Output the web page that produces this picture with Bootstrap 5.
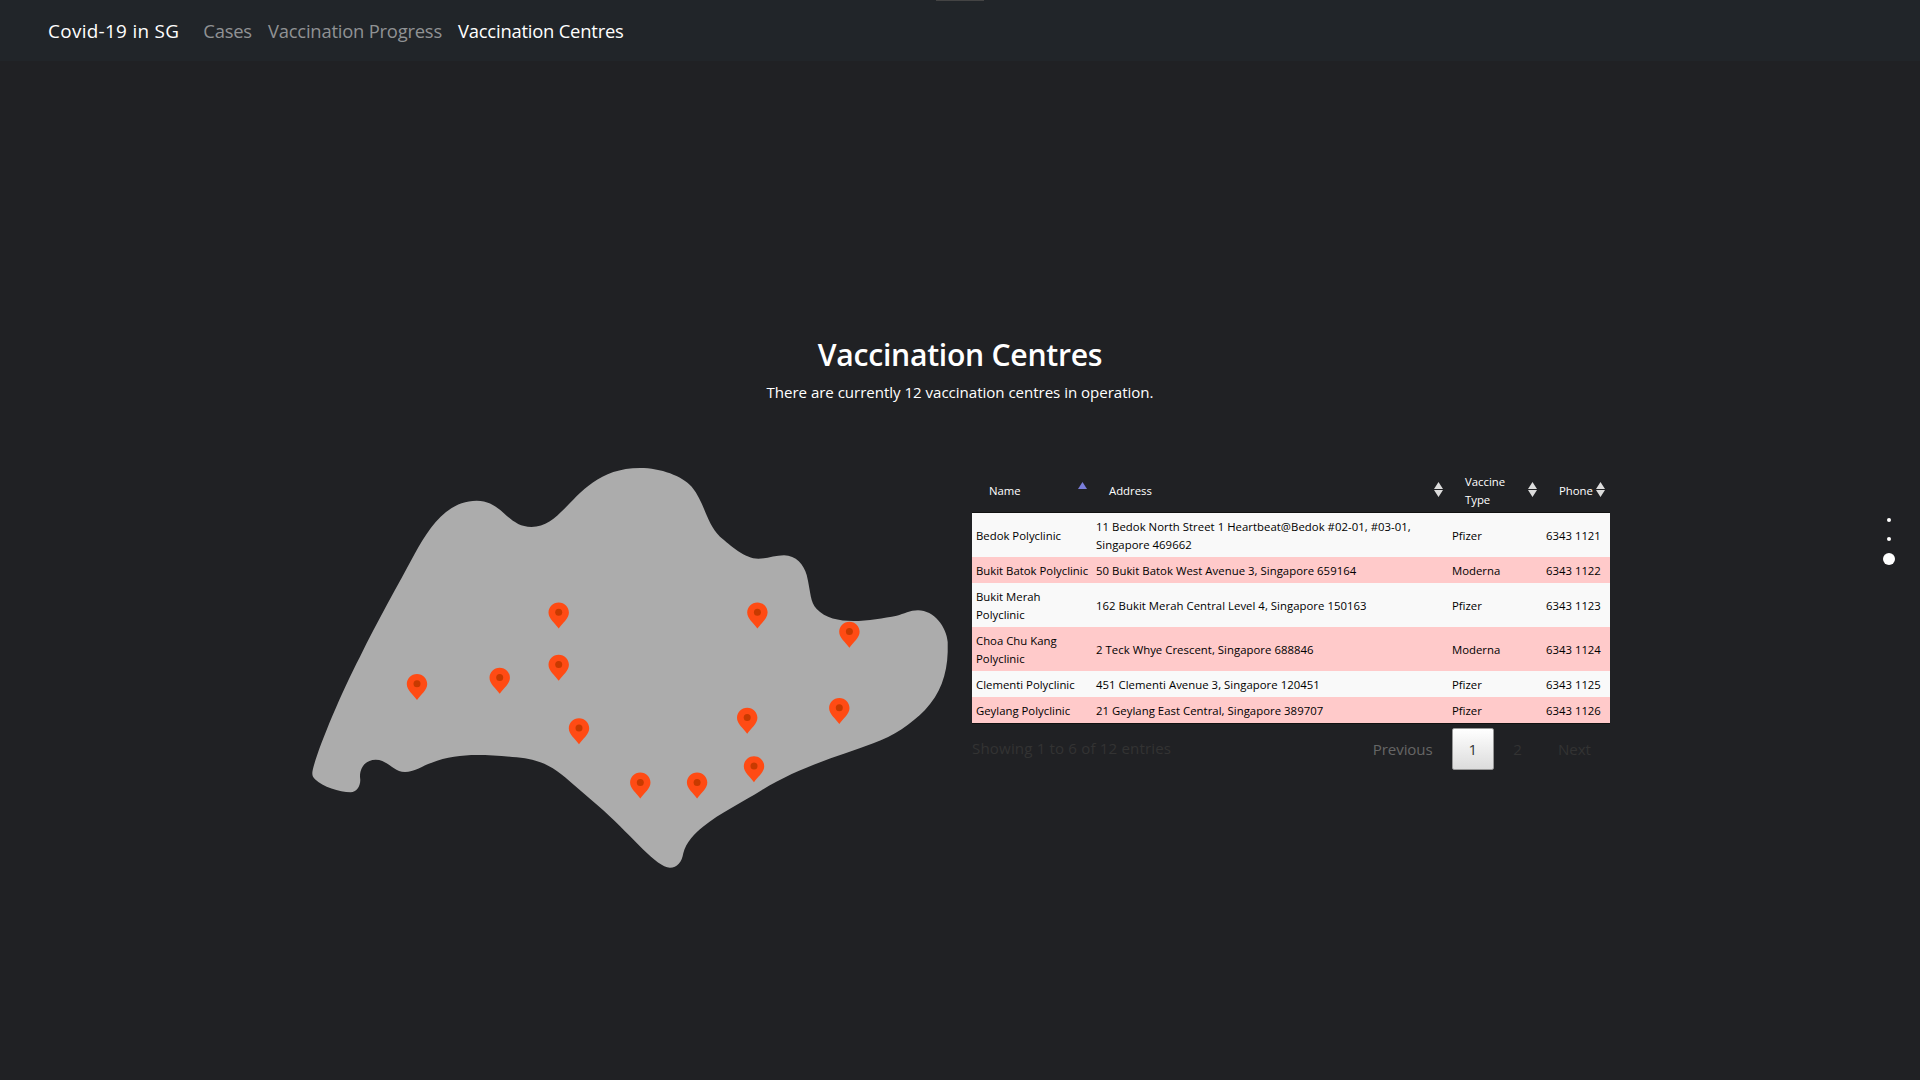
<!DOCTYPE html>
<html lang="en">
<head>
<meta charset="utf-8">
<meta name="viewport" content="width=device-width, initial-scale=1">
<title>Covid-19 in SG</title>
<link href="https://cdn.jsdelivr.net/npm/bootstrap@5.3.0/dist/css/bootstrap.min.css" rel="stylesheet">
<style>
body{background:#202124;color:#fff;font-family:"Open Sans","Noto Sans",sans-serif;font-size:15.1px;height:100vh;overflow:hidden}
.topbar{height:61px;padding:0 48px;background:#212529}
.topbar .navbar-brand{font-size:18.9px;margin-right:16px;letter-spacing:.31px;padding:7px 0 5px}
.topbar .nav-link{font-size:18.4px;letter-spacing:-.21px;color:#909294}
.topbar .nav-link.active{color:#fff}
.grip{width:48px;height:1px;background:#444;left:936px}
.centres{padding-top:275px}
.centres h2{font-size:30.2px;font-weight:600;line-height:38px;margin-bottom:6px;letter-spacing:-.3px}
.centres .intro{line-height:24px;margin-bottom:63px;letter-spacing:-.04px}
.island{display:block;width:636px;height:402px}
.clinics{width:638px;table-layout:fixed;font-size:11.35px;line-height:18px;color:#000;border-collapse:separate;border-spacing:0;white-space:nowrap;margin-top:1px}
.clinics th{position:relative;height:44px;padding:5px 17px 3px;color:#fff;font-weight:400;vertical-align:middle;border-bottom:1px solid #111}
.clinics td{padding:5px 4px 3px;background:#f9f9f9;vertical-align:middle}
.clinics td:nth-child(2){letter-spacing:.035px}
.clinics tr:nth-child(even) td{background:#ffcaca}
.clinics tr:last-child td{border-bottom:1px solid #111}
.sorter{position:absolute;right:5px;top:14px;width:9px;height:15px}
.tblfoot{width:638px;height:46px;padding:4px 2px 0 0}
.tblfoot .info{color:#333;line-height:24px;padding-top:8px;letter-spacing:.15px}
.pgbtn{height:42px;min-width:42px;padding:8px 16px;line-height:24px;border:1px solid transparent;margin-left:2px;color:#333}
.pgbtn.prev{color:#666;letter-spacing:-.1px}
.pgbtn.current{border-color:#979797;border-radius:2px;background:linear-gradient(#fff,#dcdcdc)}
.dots{right:25px;top:518px;width:12px}
.dots i{width:4px;height:4px;border-radius:50%;background:#fff;margin-bottom:15px}
.dots i.on{width:12px;height:12px;margin:-3px 0 0}
</style>
</head>
<body>
<nav class="navbar navbar-expand topbar">
  <a class="navbar-brand text-white" href="#">Covid-19 in SG</a>
  <div class="navbar-nav">
    <a class="nav-link" href="#">Cases</a>
    <a class="nav-link" href="#">Vaccination Progress</a>
    <a class="nav-link active" href="#">Vaccination Centres</a>
  </div>
</nav>
<div class="grip position-absolute top-0"></div>
<main class="container centres">
  <div class="text-center">
    <h2>Vaccination Centres</h2>
    <p class="intro">There are currently 12 vaccination centres in operation.</p>
  </div>
  <div class="row">
    <div class="col-6">
      <svg class="island" viewBox="312 467 636 402">
        <defs><g id="pin"><path d="M0 0C5.8 0 10.2 4.6 10.2 10C10.2 16 4 20.500 0 26C-4 20.500-10.200 16-10.200 10C-10.200 4.600-5.800 0 0 0Z" fill="#ff4b14"/><circle cy="9.800" r="3.500" fill="#c83a00"/></g></defs>
        <path fill="#acacac" d="M312.300 773C313 761 338 699 360 656.700C378 620 397 587 415 553.300C429 528 447 500.700 476.700 500.700C503 501 507 527 531.500 527C567 527 577 468 640 468C661 468 682 476 691.700 486.700C705 503 706 523 720 536.700C731 546 745 558.700 758.300 558.700C768 558.700 775 555.300 784 555.300C796 555.300 804 565 806.700 575C811 593 810 602 816.700 609C825 618 839 621 853.300 621C868 621 884 618 896.700 615.700C904 614 910 610.300 918 610.300C934 610.300 946.500 627 947.700 642V652C947 675 940 694 925 710C911 724 894 736 873.300 743.300C840 756 801 766 762 790C743 802 720 813 703 826.700C695 833 686 842 683.300 853.300C682 862 677 867.700 670 867.700C656 867 635 839 603 810L574 785C555 768 544 760 516.700 757.300C503 756 490 755 476.700 755C462 755 446 757 431.700 762.700C422 766 414 772 405 772C393 772 388 759.700 375.700 759.700C366 759.700 360 767 360 776.700L360.300 780C360.300 787 356 792.300 350.700 792.300C339 792 323 787 315 779.300C313 777 312.300 776 312.300 773Z"/>
        <use href="#pin" x="417" y="674"/><use href="#pin" x="499.700" y="667.700"/><use href="#pin" x="558.700" y="602.500"/><use href="#pin" x="558.700" y="654.800"/><use href="#pin" x="579" y="718.200"/><use href="#pin" x="640.300" y="772.600"/><use href="#pin" x="697.100" y="772.600"/><use href="#pin" x="754" y="756.200"/><use href="#pin" x="747.200" y="707.700"/><use href="#pin" x="839.300" y="698"/><use href="#pin" x="849.400" y="621.800"/><use href="#pin" x="757.400" y="602.500"/>
      </svg>
    </div>
    <div class="col-6">
      <table class="clinics">
        <colgroup><col width="120"><col width="356"><col width="94"><col width="68"></colgroup>
        <thead><tr>
          <th>Name<svg class="sorter" viewBox="0 0 9 15"><path d="M4.500 0L9 7H0Z" fill="#7a7edb"/></svg></th>
          <th>Address<svg class="sorter" viewBox="0 0 9 15"><path d="M4.500 0L9 7H0ZM0 8H9L4.500 15Z" fill="#dcdcdc"/></svg></th>
          <th>Vaccine<br>Type<svg class="sorter" viewBox="0 0 9 15"><path d="M4.500 0L9 7H0ZM0 8H9L4.500 15Z" fill="#dcdcdc"/></svg></th>
          <th>Phone<svg class="sorter" viewBox="0 0 9 15"><path d="M4.500 0L9 7H0ZM0 8H9L4.500 15Z" fill="#dcdcdc"/></svg></th>
        </tr></thead>
        <tbody>
          <tr><td>Bedok Polyclinic</td><td>11 Bedok North Street 1 Heartbeat@Bedok #02-01, #03-01,<br>Singapore 469662</td><td>Pfizer</td><td>6343 1121</td></tr>
          <tr><td>Bukit Batok Polyclinic</td><td>50 Bukit Batok West Avenue 3, Singapore 659164</td><td>Moderna</td><td>6343 1122</td></tr>
          <tr><td>Bukit Merah<br>Polyclinic</td><td>162 Bukit Merah Central Level 4, Singapore 150163</td><td>Pfizer</td><td>6343 1123</td></tr>
          <tr><td>Choa Chu Kang<br>Polyclinic</td><td>2 Teck Whye Crescent, Singapore 688846</td><td>Moderna</td><td>6343 1124</td></tr>
          <tr><td>Clementi Polyclinic</td><td>451 Clementi Avenue 3, Singapore 120451</td><td>Pfizer</td><td>6343 1125</td></tr>
          <tr><td>Geylang Polyclinic</td><td>21 Geylang East Central, Singapore 389707</td><td>Pfizer</td><td>6343 1126</td></tr>
        </tbody>
      </table>
      <div class="tblfoot d-flex justify-content-between">
        <div class="info">Showing 1 to 6 of 12 entries</div>
        <div class="d-flex">
          <div class="pgbtn prev">Previous</div><div class="pgbtn current text-center">1</div><div class="pgbtn text-center">2</div><div class="pgbtn next">Next</div>
        </div>
      </div>
    </div>
  </div>
</main>
<div class="dots position-absolute d-flex flex-column align-items-center"><i></i><i></i><i class="on"></i></div>
<script src="https://cdn.jsdelivr.net/npm/bootstrap@5.3.0/dist/js/bootstrap.bundle.min.js"></script>
</body>
</html>
